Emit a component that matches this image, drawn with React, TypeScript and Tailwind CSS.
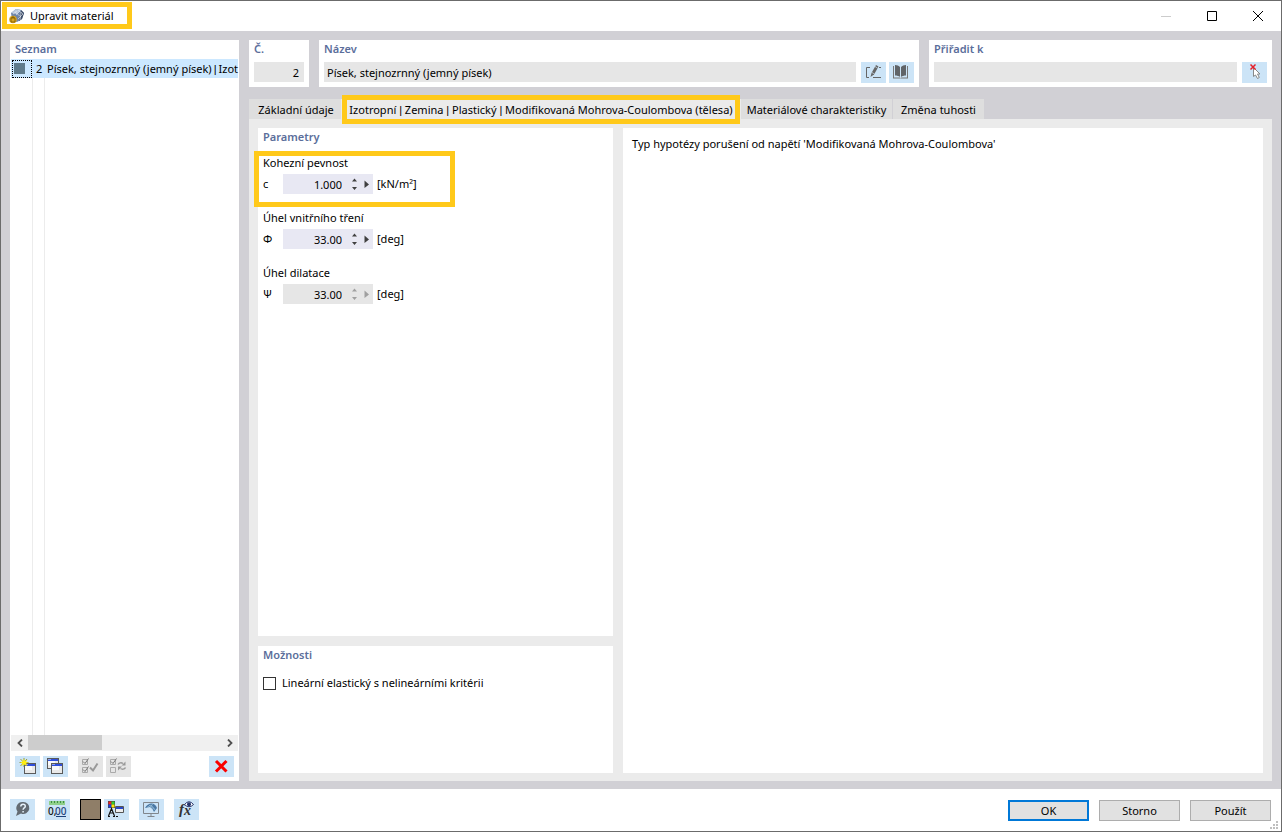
import type { ReactNode } from "react";

interface ToolButtonProps {
  label: string;
  disabled?: boolean;
  children: ReactNode;
}

function ToolButton({ label, disabled, children }: ToolButtonProps) {
  return (
    <button
      type="button"
      aria-label={label}
      disabled={disabled}
      className="h-[21px] w-[25px] shrink-0 bg-[#cce4f7] disabled:bg-[#e5e5e5]"
    >
      <svg viewBox="0 0 25 21" className="block h-[21px] w-[25px]" fill="none">
        {children}
      </svg>
    </button>
  );
}

function MiniWindow({ x, y }: { x: number; y: number }) {
  return (
    <g shapeRendering="crispEdges">
      <rect x={x} y={y} width="12" height="11" fill="#5a5a5a" />
      <rect x={x + 1} y={y + 3} width="10" height="7" fill="#e9e9e9" />
      <rect x={x + 1} y={y + 3} width="7" height="4" fill="#fafafa" />
      <rect x={x + 1} y={y + 1} width="10" height="2" fill="#3150dc" />
      <rect x={x + 1} y={y + 1} width="3" height="1" fill="#8fa3f0" />
    </g>
  );
}

// Narrow separator bar between the parts of a material description
function Bar() {
  return <span className="font-['Liberation_Sans',sans-serif]">|</span>;
}

function PanelTitle({ children }: { children: ReactNode }) {
  return (
    <h2 className="h-[18px] px-[5px] text-[11px] leading-[18px] font-semibold text-[#5b6e9b]">
      {children}
    </h2>
  );
}

interface ParameterProps {
  id: string;
  title: string;
  symbol: string;
  value: string;
  unit: ReactNode;
  disabled?: boolean;
  highlighted?: boolean;
}

function Parameter({ id, title, symbol, value, unit, disabled, highlighted }: ParameterProps) {
  return (
    <div className="relative px-[5px]">
      {highlighted && (
        <div className="pointer-events-none absolute -top-0.5 -left-1 h-14 w-[201px] border-5 border-[#ffc91a]" />
      )}
      <label htmlFor={id} className="block h-[21px] leading-5">
        {title}
      </label>
      <div className="flex h-5 items-center">
        <span className="w-5">{symbol}</span>
        <div className={`flex h-5 w-[90px] items-center ${disabled ? "bg-[#e6e6e6] text-[#a0a0a0]" : "bg-[#e8e8f3] text-[#404040]"}`}>
          <input
            id={id}
            defaultValue={value}
            disabled={disabled}
            className="h-5 w-[59px] bg-transparent text-right text-black outline-none"
          />
          <svg viewBox="0 0 31 20" className="h-5 w-[31px]" fill="currentColor">
            <path d="M10 7.500 12.500 4.500 15 7.500zM10 13 12.500 16 15 13zM22.500 6.500 27 10.500 22.500 14z" />
          </svg>
        </div>
        <span className="ml-1">{unit}</span>
      </div>
    </div>
  );
}

function TitleBar() {
  return (
    <header className="relative flex h-[30px] shrink-0 items-center bg-white pl-2">
      <svg viewBox="0 0 16 16" className="size-4" fill="none">
        <path d="M2 5 7 1 12 2 15 5 13 11 8 14 3 12Z" fill="#6f86a8" />
        <path d="M2 5 7 1 12 2 8 6Z" fill="#b9c9dd" />
        <path d="M12 2 15 5 13 11 10 13 11 6Z" fill="#3d4b66" />
        <path d="M4 6 8 3M7 7 11 3M6 4 12 9M9 2 14 6M12 4 11 12M14 6 9 11" stroke="#e5ecf5" strokeWidth=".6" />
        <circle cx="4" cy="11.5" r="3.8" fill="#d9a520" />
        <path d="M2 10h4v4H2zM3 10V9h2v1" stroke="#775500" strokeWidth=".8" />
      </svg>
      <h1 className="ml-[5px] flex-1">Upravit materiál</h1>
      <div className="pointer-events-none absolute top-px left-px h-[27px] w-[130px] border-5 border-[#ffc91a]" />
      <button type="button" aria-label="Minimalizovat" disabled className="flex h-full w-[46px] items-center justify-center">
        <svg viewBox="0 0 10 10" className="size-2.5"><path d="M0 5.5h10" stroke="#ccc" /></svg>
      </button>
      <button type="button" aria-label="Maximalizovat" className="flex h-full w-[46px] items-center justify-center">
        <svg viewBox="0 0 10 10" className="size-2.5" fill="none"><path d="M.5.5h9v9h-9z" stroke="#000" /></svg>
      </button>
      <button type="button" aria-label="Zavřít" className="flex h-full w-[46px] items-center justify-center">
        <svg viewBox="0 0 10 10" className="size-2.5"><path d="m0 0 10 10M10 0 0 10" stroke="#000" /></svg>
      </button>
    </header>
  );
}

function MaterialList() {
  return (
    <aside className="flex w-[229px] shrink-0 flex-col bg-white">
      <PanelTitle>Seznam</PanelTitle>
      <div className="mx-px mt-px flex min-h-0 flex-1 flex-col">
        <ul>
          <li className="flex h-[19px] items-center bg-[#cce8ff] whitespace-nowrap">
            <span className="mx-px flex h-[18px] w-5 shrink-0 items-center border border-dotted border-black pl-px">
              <span className="size-[11px] bg-[#607b8b]" />
            </span>
            <span className="w-3.5 shrink-0 pl-[3px]">2</span>
            <span className="flex gap-0.5">
              <span>Písek, stejnozrnný (jemný písek)</span>
              <Bar />
              <span>Izot</span>
            </span>
          </li>
        </ul>
        <div className="flex flex-1">
          <div className="w-[22px] border-r border-[#ececec]" />
          <div className="w-3 border-r border-[#ececec]" />
        </div>
        <div className="flex h-4 items-start bg-[#f0f0f0]">
          <button type="button" aria-label="Posunout vlevo" className="flex h-[15px] w-[17px] items-center justify-center">
            <svg viewBox="0 0 6 8" className="h-2 w-1.5" fill="none"><path d="M5 .5 1.5 4 5 7.5" stroke="#505050" strokeWidth="1.8" /></svg>
          </button>
          <div className="h-[15px] w-[74px] bg-[#cdcdcd]" />
          <button type="button" aria-label="Posunout vpravo" className="ml-auto flex h-[15px] w-[17px] items-center justify-center">
            <svg viewBox="0 0 6 8" className="h-2 w-1.5" fill="none"><path d="M1 .5 4.500 4 1 7.5" stroke="#505050" strokeWidth="1.8" /></svg>
          </button>
        </div>
      </div>
      <div className="flex h-[30px] shrink-0 items-center gap-[3px] px-[5px]">
        <ToolButton label="Nový">
          <MiniWindow x={9} y={7} />
          <path d="M9 2v9M4.500 6.500h9M5.500 3 12 10M12 3 5.500 10" stroke="#7d8626" strokeWidth=".8" />
          <path d="m9 2.500 1 2.500 2.500-1.500L11 6l2.500.8L11 7.500l1 2.500-3-1.500L6.500 10l1-2.500-2.500-1 2.500-.8L6 3.500 8 5z" fill="#ffee10" />
        </ToolButton>
        <ToolButton label="Kopírovat">
          <MiniWindow x={4} y={2} />
          <MiniWindow x={8} y={7} />
        </ToolButton>
        <div className="w-1" />
        <ToolButton label="Vybrat vše" disabled>
          <path d="M4.500 3.500h5v5h-5zM4.500 11.500h5v5h-5z" stroke="#aaa" />
          <path d="m5 5.500 2 2 3.500-5M5 13.500l2 2 3.500-5" stroke="#777" />
          <path d="m12 11.500 3 3 4.500-7" stroke="#999" strokeWidth="2" />
        </ToolButton>
        <ToolButton label="Obrátit výběr" disabled>
          <path d="M4.500 3.500h5v5h-5zM4.500 11.500h5v5h-5z" stroke="#aaa" />
          <path d="m5 5.500 2 2 3.500-5" stroke="#777" />
          <path d="M12 8.500c1-2 3.500-2 5-1M19.500 11.500c-1 2-3.500 2-5 1" stroke="#999" strokeWidth="1.500" />
          <path d="M19.500 5.500v4h-4zM12 14.500v-4h4z" fill="#999" />
        </ToolButton>
        <div className="flex-1" />
        <ToolButton label="Smazat">
          <path d="m7 5 10.500 10.500M17.500 5 7 15.500" stroke="#fa0000" strokeWidth="3" />
        </ToolButton>
      </div>
    </aside>
  );
}

function MaterialHeader() {
  return (
    <div className="flex h-[47px] gap-2.5">
      <section className="w-[60px] bg-white">
        <PanelTitle><label htmlFor="number">Č.</label></PanelTitle>
        <input id="number" readOnly defaultValue="2" className="mx-[5px] mt-1 block h-5 w-[50px] bg-[#e6e6e6] pr-[5px] text-right outline-none" />
      </section>
      <section className="min-w-0 flex-1 bg-white">
        <PanelTitle><label htmlFor="name">Název</label></PanelTitle>
        <div className="mt-1 flex gap-[3px] px-[5px]">
          <input id="name" readOnly defaultValue="Písek, stejnozrnný (jemný písek)" className="mr-0.5 h-5 min-w-0 flex-1 bg-[#e6e6e6] px-[3px] outline-none" />
          <ToolButton label="Upravit název">
            <path d="M9 5.500H5.500v10H8M12 15.500h8M18 5.500h2" stroke="#666" />
            <path d="m9.500 15 1-4 4.500-8 2.500 1.500-4.500 8z" fill="#666" />
            <path d="m14 4.500 2.500 1.500M11 10.500l2.500 1.500" stroke="#cce4f7" strokeWidth=".7" />
          </ToolButton>
          <ToolButton label="Knihovna materiálů">
            <path d="M4 4h1v11.500h6l.5 1 .5-1h6V4h1v12.500H4z" fill="#777" />
            <path d="M6 3c2 0 4 .8 5 2v10c-1-1-3-1.500-5-1.500z" fill="#606468" />
            <path d="M17 3c-2 0-4 .8-5 2v10c1-1 3-1.500 5-1.500z" fill="#606468" />
          </ToolButton>
        </div>
      </section>
      <section className="w-[343px] bg-white">
        <PanelTitle><label htmlFor="assign">Přiřadit k</label></PanelTitle>
        <div className="mt-1 flex gap-[5px] px-[5px]">
          <input id="assign" readOnly className="h-5 min-w-0 flex-1 bg-[#e6e6e6] outline-none" />
          <ToolButton label="Vybrat v grafice">
            <path d="M11.500 5.500v9l2-1.500 2 3.500 1.800-1-1.800-3.500h2.500z" fill="#fff" stroke="#888" />
            <path d="m8.500 2.500 5 5M13.500 2.500l-5 5" stroke="#e5202a" strokeWidth="1.500" />
          </ToolButton>
        </div>
      </section>
    </div>
  );
}

function MaterialTabs() {
  return (
    <div role="tablist" className="mt-3 flex h-5 shrink-0 bg-[#d1d0d5]">
      <button type="button" role="tab" className="h-[21px] w-[92px] bg-[#dedede] pl-0.5">Základní údaje</button>
      <button type="button" role="tab" aria-selected="true" className="relative h-[21px] w-[400px] bg-[#ebebeb] whitespace-nowrap">
        Izotropní <Bar /> Zemina <Bar /> Plastický <Bar /> Modifikovaná Mohrova-Coulombova (tělesa)
        <span className="pointer-events-none absolute -top-1 left-px h-[29px] w-[398px] border-5 border-[#ffc91a]" />
      </button>
      <button type="button" role="tab" className="h-[21px] w-[151px] bg-[#dedede]">Materiálové charakteristiky</button>
      <button type="button" role="tab" className="h-[21px] w-[92px] border-l border-[#d1d0d5] bg-[#dedede]">Změna tuhosti</button>
    </div>
  );
}

function TabContent() {
  return (
    <div className="flex min-h-0 flex-1 gap-2.5 bg-[#ebebeb] px-[9px] pt-[9px] pb-2">
      <div className="flex w-[355px] shrink-0 flex-col gap-2.5">
        <section className="flex-1 bg-white">
          <PanelTitle>Parametry</PanelTitle>
          <div className="flex flex-col gap-3.5 pt-[7px]">
            <Parameter
              id="cohesion"
              title="Kohezní pevnost"
              symbol="c"
              value="1.000"
              unit="[kN/m²]"
              highlighted
            />
            <Parameter id="friction" title="Úhel vnitřního tření" symbol="Φ" value="33.00" unit="[deg]" />
            <Parameter id="dilatancy" title="Úhel dilatace" symbol="Ψ" value="33.00" unit="[deg]" disabled />
          </div>
        </section>
        <section className="h-[127px] bg-white">
          <PanelTitle>Možnosti</PanelTitle>
          <label className="mt-[11px] flex items-center gap-1.5 px-[5px]">
            <input type="checkbox" className="size-[13px] appearance-none border border-[#333] bg-white checked:bg-[#333]" />
            Lineární elastický s nelineárními kritérii
          </label>
        </section>
      </div>
      <section className="min-w-0 flex-1 bg-white px-[9px] pt-2">
        <p>Typ hypotézy porušení od napětí 'Modifikovaná Mohrova-Coulombova'</p>
      </section>
    </div>
  );
}

function Footer() {
  return (
    <footer className="relative flex h-[42px] shrink-0 items-start gap-2.5 bg-white px-[9px] pt-2.5">
      <ToolButton label="Nápověda">
        <path d="M13 3a6 6 0 1 1-2 11.500L6 17l1.500-4.500A6 6 0 0 1 13 3Z" fill="#636b73" />
        <path d="M10.800 7.500c0-3 4.500-3 4.500-.3 0 1.800-2.200 1.600-2.200 3.500M13.100 12v1.500" stroke="#e6f1fa" strokeWidth="1.500" />
      </ToolButton>
      <ToolButton label="Jednotky a desetinná místa">
        <path d="M4 2h16v4H4z" fill="#8fcf8a" />
        <path d="M6.500 2v2M9.500 2v2M12.500 2v2M15.500 2v2M18.500 2v2" stroke="#3f8f45" />
        <text x="3" y="15.500" fontSize="10" fontWeight="500" fill="#111">0,</text>
        <text x="10" y="15.500" fontSize="10" fontWeight="500" fill="#1c3f78">00</text>
        <path d="M11 17.500h10" stroke="#1c3f78" />
      </ToolButton>
      <div className="flex gap-[3px]">
        <button type="button" aria-label="Barva" className="size-[21px] border border-black bg-[#8f7e68]" />
        <ToolButton label="Zobrazení">
          <path d="M4 2h7v7H4z" fill="#444" />
          <path d="M4.500 2.500h3v3h-3z" fill="#f02020" />
          <path d="M7.500 2.500h3v3h-3z" fill="#30d030" />
          <path d="M4.500 5.500h3v3h-3z" fill="#2040e0" />
          <path d="M7.500 5.500h3v3h-3z" fill="#ffe600" />
          <path d="m4.500 17 3-7.500 3 7.500M5.500 14h4M4 17.500h2M9 17.500h2M12 17.500h2" stroke="#111" strokeWidth="1.200" />
          <path d="M11.500 7.500h8v6h-8z" fill="#eee" stroke="#555" />
          <path d="M12 8h7v2h-7z" fill="#2948c8" />
        </ToolButton>
      </div>
      <ToolButton label="Grafika">
        <path d="M4.500 3.500h15v11h-15zM12 15v2M8.500 17.500h7" stroke="#80868c" />
        <path d="M6 9c1.500-3 4-4.500 6.500-4.500S17 6 18 9l-3 4-1.500-3L11 8z" fill="#4a78a4" />
        <path d="M8 8.500 12 6l3.500 4M10 6l6 5M13.500 5l-2 3.500" stroke="#9fc4de" strokeWidth=".7" />
      </ToolButton>
      <ToolButton label="Parametry vzorce">
        <text x="5" y="15" fontSize="15" fontStyle="italic" fontWeight="700" fontFamily="Liberation Serif, serif" fill="#333">f</text>
        <text x="10" y="16" fontSize="14" fontStyle="italic" fontWeight="700" fontFamily="Liberation Serif, serif" fill="#333">x</text>
        <path d="M10.500 5.500Q15 0 19.500 5.500 15 10 10.500 5.500Z" fill="#fff" stroke="#26346b" />
        <circle cx="15" cy="5.300" r="2" fill="#26346b" />
      </ToolButton>
      <div className="ml-auto flex gap-2.5 pt-px pr-px">
        <button type="button" className="h-[21px] w-[81px] border-2 border-[#0078d7] bg-[#e1e1e1]">OK</button>
        <button type="button" className="h-[21px] w-[81px] border border-[#adadad] bg-[#e1e1e1]">Storno</button>
        <button type="button" className="h-[21px] w-[81px] border border-[#adadad] bg-[#e1e1e1]">Použít</button>
      </div>
      <svg viewBox="0 0 8 8" className="absolute right-[3px] bottom-0.5 size-2" fill="#bfbfbf">
        <path d="M6 0h2v2H6zM3 3h2v2H3zM6 3h2v2H6zM0 6h2v2H0zM3 6h2v2H3zM6 6h2v2H6z" />
      </svg>
    </footer>
  );
}

export default function App() {
  return (
    <div className="flex h-screen flex-col border border-[#6b6b6b] bg-white font-['Noto_Sans',sans-serif] text-[11px] leading-4 text-black">
      <TitleBar />
      <main className="flex min-h-0 flex-1 gap-2.5 bg-[#d1d0d5] px-[9px] pt-[9px] pb-2">
        <MaterialList />
        <div className="flex min-w-0 flex-1 flex-col">
          <MaterialHeader />
          <MaterialTabs />
          <TabContent />
        </div>
      </main>
      <Footer />
    </div>
  );
}
